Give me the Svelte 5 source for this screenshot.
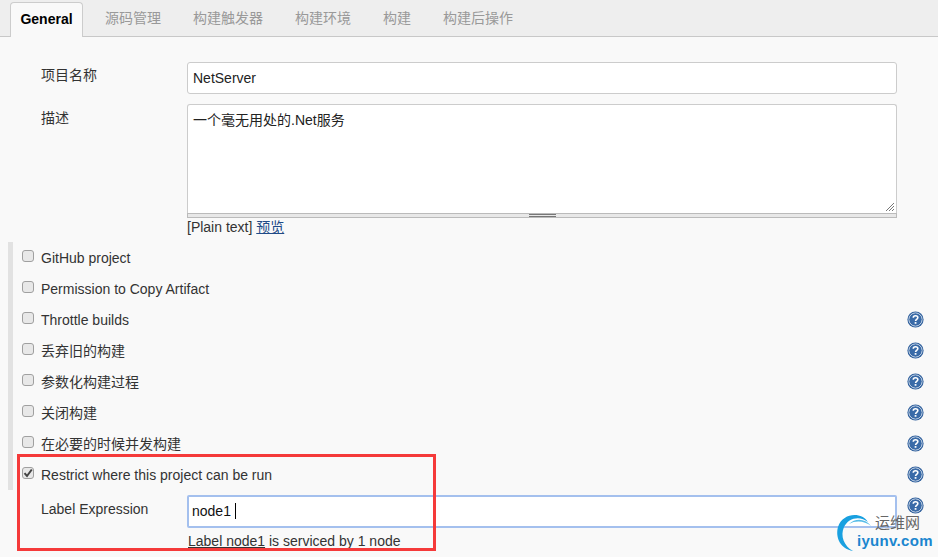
<script>
  const tabs = ['源码管理', '构建触发器', '构建环境', '构建', '构建后操作'];
  const options = [
    { label: 'GitHub project', help: false },
    { label: 'Permission to Copy Artifact', help: false },
    { label: 'Throttle builds', help: true },
    { label: '丢弃旧的构建', help: true },
    { label: '参数化构建过程', help: true },
    { label: '关闭构建', help: true },
    { label: '在必要的时候并发构建', help: true },
    { label: 'Restrict where this project can be run', help: true, checked: true },
  ];
</script>

{#snippet helpIcon()}
  <svg class="help" width="17" height="17" viewBox="0 0 16 16">
    <circle cx="8" cy="8" r="7.6" fill="#2f5f9c" />
    <circle cx="8" cy="8" r="6.2" fill="none" stroke="#cfdcec" stroke-width="0.9" />
    <circle cx="8" cy="8" r="5.4" fill="#3a6ba8" />
    <path d="M5.9 6.3c0-1.2 1-1.9 2.1-1.9s2.2.7 2.2 1.8c0 1.6-2.1 1.6-2.1 3.1" fill="none" stroke="#fff" stroke-width="1.5" />
    <rect x="7.2" y="10.4" width="1.7" height="1.6" fill="#fff" />
  </svg>
{/snippet}

<div class="page">
  <div class="tabbar">
    <div class="tab active">General</div>
    <div class="rest">
      {#each tabs as t}
        <span class="tab">{t}</span>
      {/each}
    </div>
  </div>

  <div class="form">
    <div class="field">
      <div class="label">项目名称</div>
      <div class="input">NetServer</div>
    </div>
    <div class="field desc">
      <div class="label">描述</div>
      <div class="control">
        <div class="textarea">
          一个毫无用处的.Net服务
          <svg class="grip" width="10" height="10" viewBox="0 0 10 10">
            <path d="M1 9 9 1M4 9l5-5M7 9l2-2" stroke="#777" stroke-width="1" fill="none" />
          </svg>
        </div>
        <div class="handle"><i></i></div>
        <div class="plain">[Plain text] <a href="#preview">预览</a></div>
      </div>
    </div>

    <div class="options">
      {#each options as o}
        <div class="option">
          <span class="box">
            {#if o.checked}
              <svg width="10" height="10" viewBox="0 0 10 10">
                <path d="M1.5 5.2 4 8 8.8 1.5" fill="none" stroke="#444" stroke-width="2" />
              </svg>
            {/if}
          </span>
          <span class="text">{o.label}</span>
          {#if o.help}{@render helpIcon()}{/if}
        </div>
      {/each}
    </div>

    <div class="field expr">
      <div class="label">Label Expression</div>
      <div class="input focus">node1 <span class="caret"></span></div>
      {@render helpIcon()}
    </div>
    <div class="note"><a href="#label">Label node1</a> is serviced by 1 node</div>
  </div>

  <div class="redbox"></div>

  <div class="mark">
    <svg width="50" height="46" viewBox="0 0 50 46">
      <path d="M33 12C27 2 8 2 3 17 0 28 6 39 18 41 9 36 5 26 9 17 13 8 25 5 33 12Z" fill="#19a0e0" />
      <path d="M36 16C30 8 20 8 14 14 21 10 30 11 36 16Z" fill="#56bde8" />
    </svg>
    <span class="cn">运维网</span>
    <span class="en">iyunv.com</span>
  </div>
</div>

<style>
  :global(body) {
    margin: 0;
    background: #f9f9f9;
  }
  .page {
    position: relative;
    width: 938px;
    height: 557px;
    overflow: hidden;
    background: #f9f9f9;
    color: #333;
    font: 14px/20px "Liberation Sans", "Noto Sans CJK SC", sans-serif;
  }
  .tabbar {
    display: flex;
    height: 36px;
    padding-left: 10px;
    background: #eee;
    border-bottom: 1px solid #c8c8c8;
  }
  .rest {
    display: flex;
    gap: 32px;
    padding-left: 22px;
  }
  .tab {
    line-height: 37px;
    color: #999;
  }
  .tab.active {
    box-sizing: border-box;
    width: 73px;
    height: 35px;
    margin-top: 2px;
    line-height: 33px;
    text-align: center;
    font-weight: 700;
    color: #000;
    background: #f9f9f9;
    border: 1px solid #ccc;
    border-bottom: 0;
    border-radius: 4px 4px 0 0;
  }
  .form {
    padding: 25px 0 0 8px;
  }
  .field {
    display: flex;
    padding-left: 33px;
  }
  .label {
    flex: 0 0 146px;
    padding-top: 3px;
  }
  .input {
    box-sizing: border-box;
    width: 710px;
    height: 32px;
    padding: 0 5px;
    line-height: 30px;
    color: #222;
    background: #fff;
    border: 1px solid #ccc;
    border-radius: 3px;
  }
  .desc {
    margin-top: 10px;
  }
  .desc .label {
    padding-top: 4px;
  }
  .control {
    width: 710px;
  }
  .textarea {
    position: relative;
    box-sizing: border-box;
    height: 109px;
    padding: 5px;
    color: #222;
    background: #fff;
    border: 1px solid #ccc;
    border-bottom: 0;
    border-radius: 3px 3px 0 0;
  }
  .grip {
    position: absolute;
    right: 1px;
    bottom: 1px;
  }
  .handle {
    display: flex;
    justify-content: center;
    box-sizing: border-box;
    height: 5px;
    background: #e8e8e8;
    border: 1px solid #bbb;
  }
  .handle i {
    width: 27px;
    height: 3px;
    border: 1px solid #777;
    border-width: 1px 0;
    box-sizing: border-box;
  }
  .plain {
    margin-top: -1px;
    line-height: 20px;
  }
  a {
    color: #204a87;
    text-decoration: underline;
  }
  .options {
    box-sizing: border-box;
    height: 248px;
    margin-top: 5px;
    padding-left: 9px;
    border-left: 5px solid #e2e2e2;
  }
  .option {
    display: flex;
    align-items: center;
    height: 31px;
  }
  .box {
    display: grid;
    place-items: center;
    box-sizing: border-box;
    width: 12px;
    height: 12px;
    margin: -3px 7px 0 0;
    background: #e8e8e8;
    border: 1px solid #a0a0a0;
    border-radius: 3px;
  }
  .text {
    flex: 1;
  }
  .help {
    flex: none;
    margin: -1px 14px 0 0;
  }
  .expr {
    margin-top: 5px;
    align-items: flex-start;
  }
  .expr .label {
    padding-top: 4px;
  }
  .expr .input {
    height: 33px;
    line-height: 29px;
    margin-right: 10px;
    padding: 0 3px;
    color: #111;
    border: 2px solid #a4c0ee;
    border-radius: 2px;
  }
  .expr .help {
    margin-top: 2px;
  }
  .caret {
    display: inline-block;
    width: 1px;
    height: 16px;
    vertical-align: -3px;
    background: #000;
  }
  .note {
    padding-left: 180px;
    margin-top: 3px;
  }
  .note a {
    color: #333;
    text-decoration-thickness: 1px;
    text-underline-offset: 1px;
  }
  .redbox {
    position: absolute;
    left: 17px;
    top: 454px;
    width: 413px;
    height: 91px;
    border: 3px solid #f53a3a;
  }
  .mark {
    position: absolute;
    left: 832px;
    top: 508px;
    width: 106px;
    height: 46px;
  }
  .mark svg {
    position: absolute;
    left: 3px;
    top: 2px;
  }
  .cn {
    position: absolute;
    left: 43px;
    top: 5px;
    font-size: 15px;
    color: #666;
  }
  .en {
    position: absolute;
    left: 25px;
    top: 23px;
    font-size: 15px;
    font-weight: 700;
    letter-spacing: 0.3px;
    color: #1b86cf;
  }
</style>
